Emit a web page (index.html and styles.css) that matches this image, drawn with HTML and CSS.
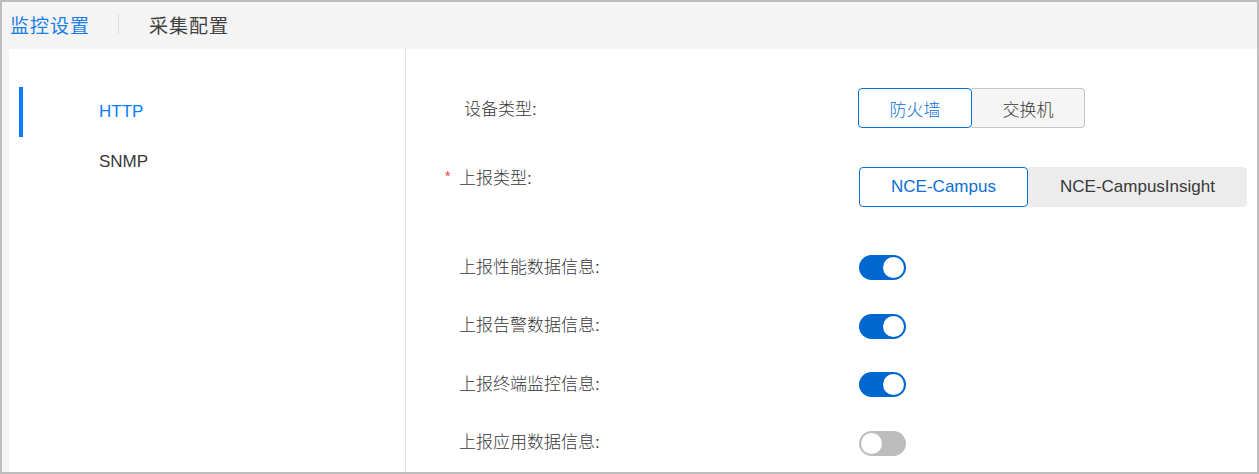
FILE: index.html
```html
<!DOCTYPE html>
<html lang="zh-CN">
<head>
    <meta charset="UTF-8">
    <meta name="viewport" content="width=device-width, initial-scale=1.0">
    <title>监控设置</title>
    <link rel="stylesheet" href="styles.css">
</head>
<body>

    <div class="frame">
        <div class="tabs">
            <span class="tab active">监控设置</span>
            <span class="tab-divider"></span>
            <span class="tab">采集配置</span>
        </div>

        <div class="main">
            <div class="sidebar">
                <div class="side-item active">HTTP</div>
                <div class="side-item">SNMP</div>
            </div>

            <div class="form">
                <div class="row row-device">
                    <label class="label">设备类型:</label>
                    <div class="segment seg-device">
                        <button class="seg-btn selected">防火墙</button>
                        <button class="seg-btn">交换机</button>
                    </div>
                </div>

                <div class="row row-report">
                    <label class="label required">上报类型:</label>
                    <div class="segment seg-report">
                        <button class="seg-btn selected">NCE-Campus</button>
                        <button class="seg-btn">NCE-CampusInsight</button>
                    </div>
                </div>

                <div class="row switch-row">
                    <label class="label">上报性能数据信息:</label>
                    <span class="switch on"></span>
                </div>
                <div class="row switch-row">
                    <label class="label">上报告警数据信息:</label>
                    <span class="switch on"></span>
                </div>
                <div class="row switch-row">
                    <label class="label">上报终端监控信息:</label>
                    <span class="switch on"></span>
                </div>
                <div class="row switch-row">
                    <label class="label">上报应用数据信息:</label>
                    <span class="switch"></span>
                </div>
            </div>
        </div>
    </div>

</body>
</html>
```

FILE: styles.css
```css
/* monitoring settings page */
* {
    box-sizing: border-box;
}
body {
    font-family: "Liberation Sans", "Noto Sans CJK SC", sans-serif;
    font-size: 17px;
    font-weight: 300;
    margin: 0;
    padding: 0;
    color: #383838;
    background-color: #fff;
}
.frame {
    height: 474px;
    border: 2px solid #bdbdbd;
    background-color: #f4f4f4;
    display: flex;
    flex-direction: column;
}
.tabs {
    height: 47px;
    flex: none;
    display: flex;
    align-items: center;
    padding: 0 0 3px 8px;
}
.tab {
    font-size: 19px;
    font-weight: 400;
    color: #404040;
    letter-spacing: 1px;
}
.tab.active {
    color: #1a7ee6;
}
.tab-divider {
    width: 1px;
    height: 20px;
    background-color: #dcdcdc;
    margin: 0 30px 0 28px;
}
.main {
    flex: 1;
    display: flex;
    margin-left: 7px;
    background-color: #fff;
}
.sidebar {
    width: 397px;
    flex: none;
    border-right: 1px solid #e3e3e3;
    padding-top: 38px;
}
.side-item {
    height: 50px;
    line-height: 50px;
    border-left: 4px solid transparent;
    margin-left: 10px;
    padding-left: 76px;
}
.side-item.active {
    border-left-color: #0a7cff;
    color: #0a7cff;
}
.form {
    flex: 1;
    padding: 39px 0 0 53px;
}
.row {
    display: flex;
    align-items: flex-start;
}
.label {
    width: 400px;
    flex: none;
    line-height: 24px;
}
.row-device .label {
    padding: 10px 0 0 5px;
}
.row-device .segment {
    margin-left: -1px;
}
.row-report {
    margin-top: 39px;
}
.required {
    position: relative;
}
.required::before {
    content: "*";
    position: absolute;
    left: -14px;
    top: -3px;
    color: #e5383b;
    font-size: 14px;
}
.segment {
    display: flex;
}
.seg-btn {
    height: 40px;
    font-family: inherit;
    font-size: 17px;
    font-weight: 300;
    color: #383838;
    border-radius: 4px;
    cursor: pointer;
}
.seg-device .seg-btn {
    width: 114px;
    background-color: #f5f5f5;
    border: 1px solid #c6c6c6;
}
.seg-device .seg-btn + .seg-btn {
    width: 113px;
    border-left: none;
    border-radius: 0 4px 4px 0;
}
.seg-report .seg-btn {
    width: 169px;
    background-color: #ececec;
    border: 1px solid #ececec;
}
.seg-report .seg-btn + .seg-btn {
    width: 219px;
    border-radius: 0 4px 4px 0;
}
.segment .seg-btn.selected {
    background-color: #fff;
    border: 1px solid #0a6fd6;
    color: #0a6fd6;
}
.switch-row {
    align-items: center;
    margin-top: 33.5px;
}
.row-report + .switch-row {
    margin-top: 48px;
}
.switch {
    position: relative;
    width: 47px;
    height: 25px;
    border-radius: 13px;
    background-color: #bdbdbd;
}
.switch::after {
    content: "";
    position: absolute;
    top: 2px;
    left: 2px;
    width: 21px;
    height: 21px;
    border-radius: 50%;
    background-color: #fff;
}
.switch.on {
    background-color: #0067d1;
}
.switch.on::after {
    left: 24px;
}
```
